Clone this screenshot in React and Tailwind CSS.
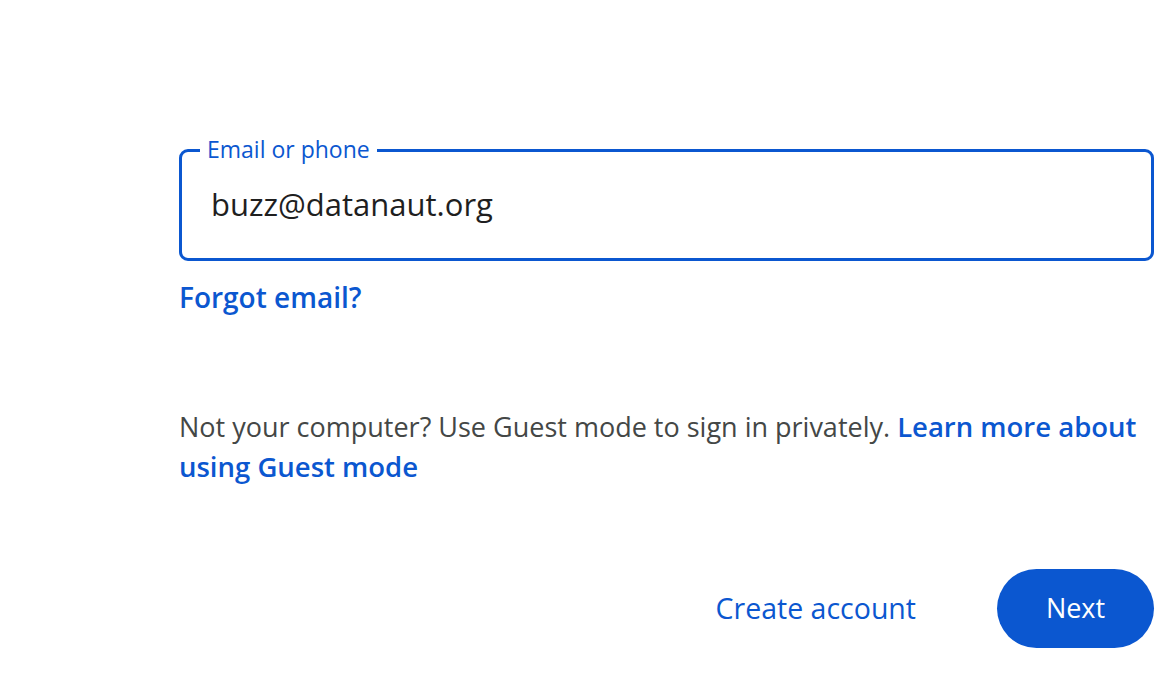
const App = () => {
  return (
    <div className="w-[1162px] h-[690px] bg-white font-['Open_Sans',_sans-serif] overflow-hidden">
      <div className="pl-[179px] pr-[8px] pt-[149px]">
        {/* Email field */}
        <div className="relative h-[112px] rounded-[9px] border-[3px] border-[#0b57d0] flex items-center pl-[29px]">
          <span className="absolute left-[18px] top-[-18px] bg-white px-[7px] text-[23px] leading-[30px] text-[#0b57d0]">
            Email or phone
          </span>
          <span className="text-[31px] text-[#1f1f1f] -mt-[2px]">buzz@datanaut.org</span>
        </div>

        <div className="mt-[18px]">
          <a className="text-[28px] font-semibold text-[#0b57d0] leading-[36px]">Forgot email?</a>
        </div>

        <p className="mt-[92px] text-[27px] leading-[40px] text-[#444746]">
          Not your computer? Use Guest mode to sign in privately.{" "}
          <a className="font-semibold text-[27.5px] text-[#0b57d0]">Learn more about using Guest mode</a>
        </p>

        <div className="mt-[82px] flex items-center justify-end gap-[81px]">
          <button className="h-[79px] text-[28.5px] text-[#0b57d0]">Create account</button>
          <button className="h-[79px] w-[157px] rounded-full bg-[#0b57d0] text-[27px] font-medium text-white">Next</button>
        </div>
      </div>
    </div>
  );
};

export default App;
